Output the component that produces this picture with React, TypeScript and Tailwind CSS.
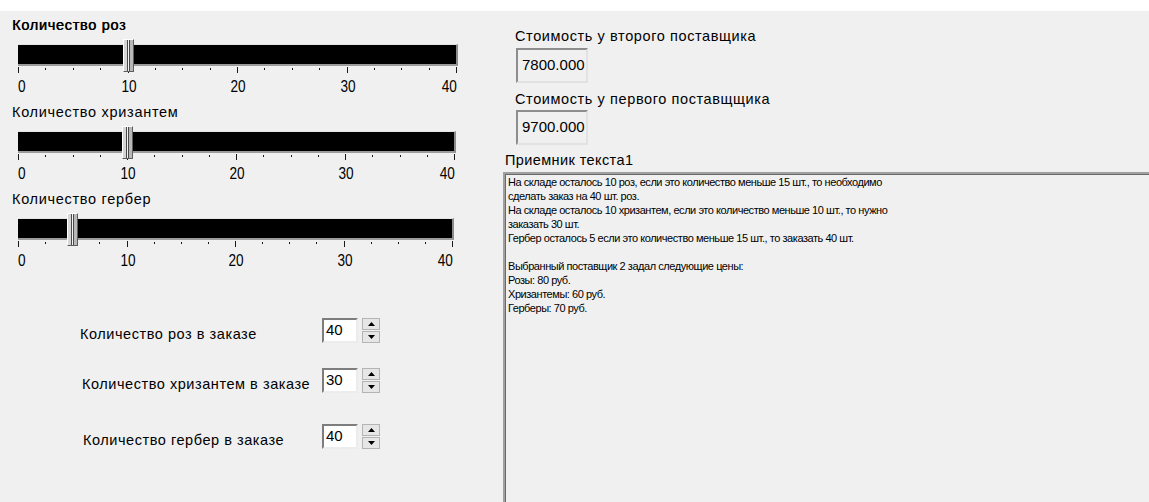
import React from 'react';

const MAX = 40;
const SCALE = [0, 10, 20, 30, 40];

const memoLines = [
  'На складе осталось 10 роз, если это количество меньше 15 шт., то необходимо',
  'сделать заказ на 40 шт. роз.',
  'На складе осталось 10 хризантем, если это количество меньше 10 шт., то нужно',
  'заказать 30 шт.',
  'Гербер осталось 5 если это количество меньше 15 шт., то заказать 40 шт.',
  '',
  'Выбранный поставщик 2 задал следующие цены:',
  'Розы: 80 руб.',
  'Хризантемы: 60 руб.',
  'Герберы: 70 руб.',
];

type TrackBarProps = {
  label: string;
  value: number;
  width: number;
  strong?: boolean;
};

const Thumb = ({ left }: { left: number }) => (
  <div
    className="absolute top-[-5px] h-[33px] w-[11px] flex border-l border-t border-l-white border-t-white border-r border-b border-r-[#5e5e5e] border-b-[#5e5e5e] bg-[#d6d6d6]"
    style={{ left }}
  >
    <div className="w-[3px]" />
    <div className="w-px bg-[#4a4a4a]" />
    <div className="w-px bg-[#f4f4f4]" />
    <div className="w-px bg-[#4a4a4a]" />
    <div className="flex-1 bg-[#b8b8b8]" />
  </div>
);

const TrackBar = ({ label, value, width, strong }: TrackBarProps) => {
  const x = (value / MAX) * width;
  const ticks = Array.from({ length: 17 }, (_, i) => (i * width) / 16);

  return (
    <div className="flex flex-col">
      <div
        className={`pl-[12px] text-[14.5px] leading-4 tracking-[0.7px] ${
          strong ? '[text-shadow:0.4px_0_0_#000]' : ''
        }`}
      >
        {label}
      </div>
      <div className="relative ml-[18px] mt-[11px]" style={{ width: width + 2 }}>
        <div className="h-[22px] bg-black border-t border-t-[#e4e4e4] border-r-2 border-r-[#8c8c8c] border-b-2 border-b-[#9c9c9c]" />
        <Thumb left={x - 5} />
        <svg width={width + 2} height={14} className="block">
          {ticks.map((t, i) => (
            <line
              key={i}
              x1={Math.round(t) + 0.5}
              x2={Math.round(t) + 0.5}
              y1={i % 4 === 0 ? 1 : 2}
              y2={i % 4 === 0 ? 7 : 4}
              stroke="#1a1a1a"
              strokeWidth={1}
            />
          ))}
        </svg>
        <div className="relative h-[14px] text-[16px] leading-[14px]">
          {SCALE.map((n, i) => {
            const pos = (i * width) / 4;
            if (i === 0) {
              return (
                <span key={n} className="absolute left-0 top-0 origin-left scale-x-[0.85]">
                  {n}
                </span>
              );
            }
            if (i === SCALE.length - 1) {
              return (
                <span key={n} className="absolute right-[1px] top-0 origin-right scale-x-[0.85]">
                  {n}
                </span>
              );
            }
            return (
              <span key={n} className="absolute top-0 -translate-x-1/2 scale-x-[0.85]" style={{ left: pos + 1 }}>
                {n}
              </span>
            );
          })}
        </div>
      </div>
    </div>
  );
};

const Arrow = ({ up }: { up?: boolean }) => (
  <svg width="7" height="4" viewBox="0 0 7 4">
    <polygon points={up ? '0,4 7,4 3.5,0' : '0,0 7,0 3.5,4'} fill="#000" />
  </svg>
);

const Spinner = ({ label, value, indent, className }: { label: string; value: number; indent: string; className: string }) => (
  <div className={`flex items-center ${className}`}>
    <div className={`w-[322px] shrink-0 ${indent} pt-[6px] text-[14.5px] leading-4 tracking-[0.55px] whitespace-nowrap`}>
      {label}
    </div>
    <div className="h-[25px] w-[36px] shrink-0 bg-white border-2 border-t-[#7d7d7d] border-l-[#7d7d7d] border-r-[#ececec] border-b-[#ececec] pl-[2px] pt-[1px] text-[15px] leading-[18px]">
      {value}
    </div>
    <div className="ml-[4px] flex h-[25px] w-[18px] shrink-0 flex-col gap-px">
      <button className="flex flex-1 items-center justify-center border border-[#b4b4b4] bg-[#e6e6e6]">
        <Arrow up />
      </button>
      <button className="flex flex-1 items-center justify-center border border-[#b4b4b4] bg-[#e6e6e6]">
        <Arrow />
      </button>
    </div>
  </div>
);

const ReadOnlyBox = ({ value, className }: { value: string; className: string }) => (
  <div
    className={`flex h-[35px] w-[72px] items-center border-2 border-t-[#8d8d8d] border-l-[#8d8d8d] border-r-[#e2e2e2] border-b-[#e2e2e2] pl-[4px] text-[15px] ${className}`}
  >
    {value}
  </div>
);

export default function App() {
  return (
    <div className="h-[502px] w-[1149px] overflow-hidden bg-white text-black font-['Liberation_Sans',Arial,sans-serif]">
      <div className="mt-[11px] flex h-[491px] bg-[#f0f0f0]">
        {/* sliders and order quantities */}
        <div className="flex w-[503px] shrink-0 flex-col pt-[6px]">
          <div className="flex flex-col gap-[10px]">
            <TrackBar label="Количество роз" value={10} width={438} strong />
            <TrackBar label="Количество хризантем" value={10} width={436} />
            <TrackBar label="Количество гербер" value={5} width={434} />
          </div>

          <div className="mt-[50px] flex flex-col">
            <Spinner label="Количество роз в заказе" value={40} indent="pl-[80px]" className="" />
            <Spinner label="Количество хризантем в заказе" value={30} indent="pl-[82px]" className="mt-[25px]" />
            <Spinner label="Количество гербер в заказе" value={40} indent="pl-[83px]" className="mt-[31px]" />
          </div>
        </div>

        {/* supplier prices and report */}
        <div className="flex min-w-0 flex-1 flex-col pt-[17px]">
          <div className="pl-[12px] text-[14.5px] leading-4 tracking-[0.6px]">Стоимость у второго поставщика</div>
          <ReadOnlyBox value="7800.000" className="ml-[13px] mt-[4px]" />
          <div className="mt-[8px] pl-[12px] text-[14.5px] leading-4 tracking-[0.6px]">Стоимость у первого поставщщика</div>
          <ReadOnlyBox value="9700.000" className="ml-[13px] mt-[3px]" />
          <div className="mt-[7px] pl-[2px] text-[14.5px] leading-4 tracking-[0.4px]">Приемник текста1</div>
          <div className="-mb-[20px] -mr-[20px] mt-[4px] flex-1 border-l-2 border-t-2 border-[#a0a0a0] shadow-[inset_1px_1px_0_#6a6a6a] pl-[3px] pt-px text-[11px] leading-[14px] tracking-[-0.45px]">
            {memoLines.map((line, i) => (
              <div key={i} className="h-[14px] whitespace-pre">
                {line}
              </div>
            ))}
          </div>
        </div>
      </div>
    </div>
  );
}
